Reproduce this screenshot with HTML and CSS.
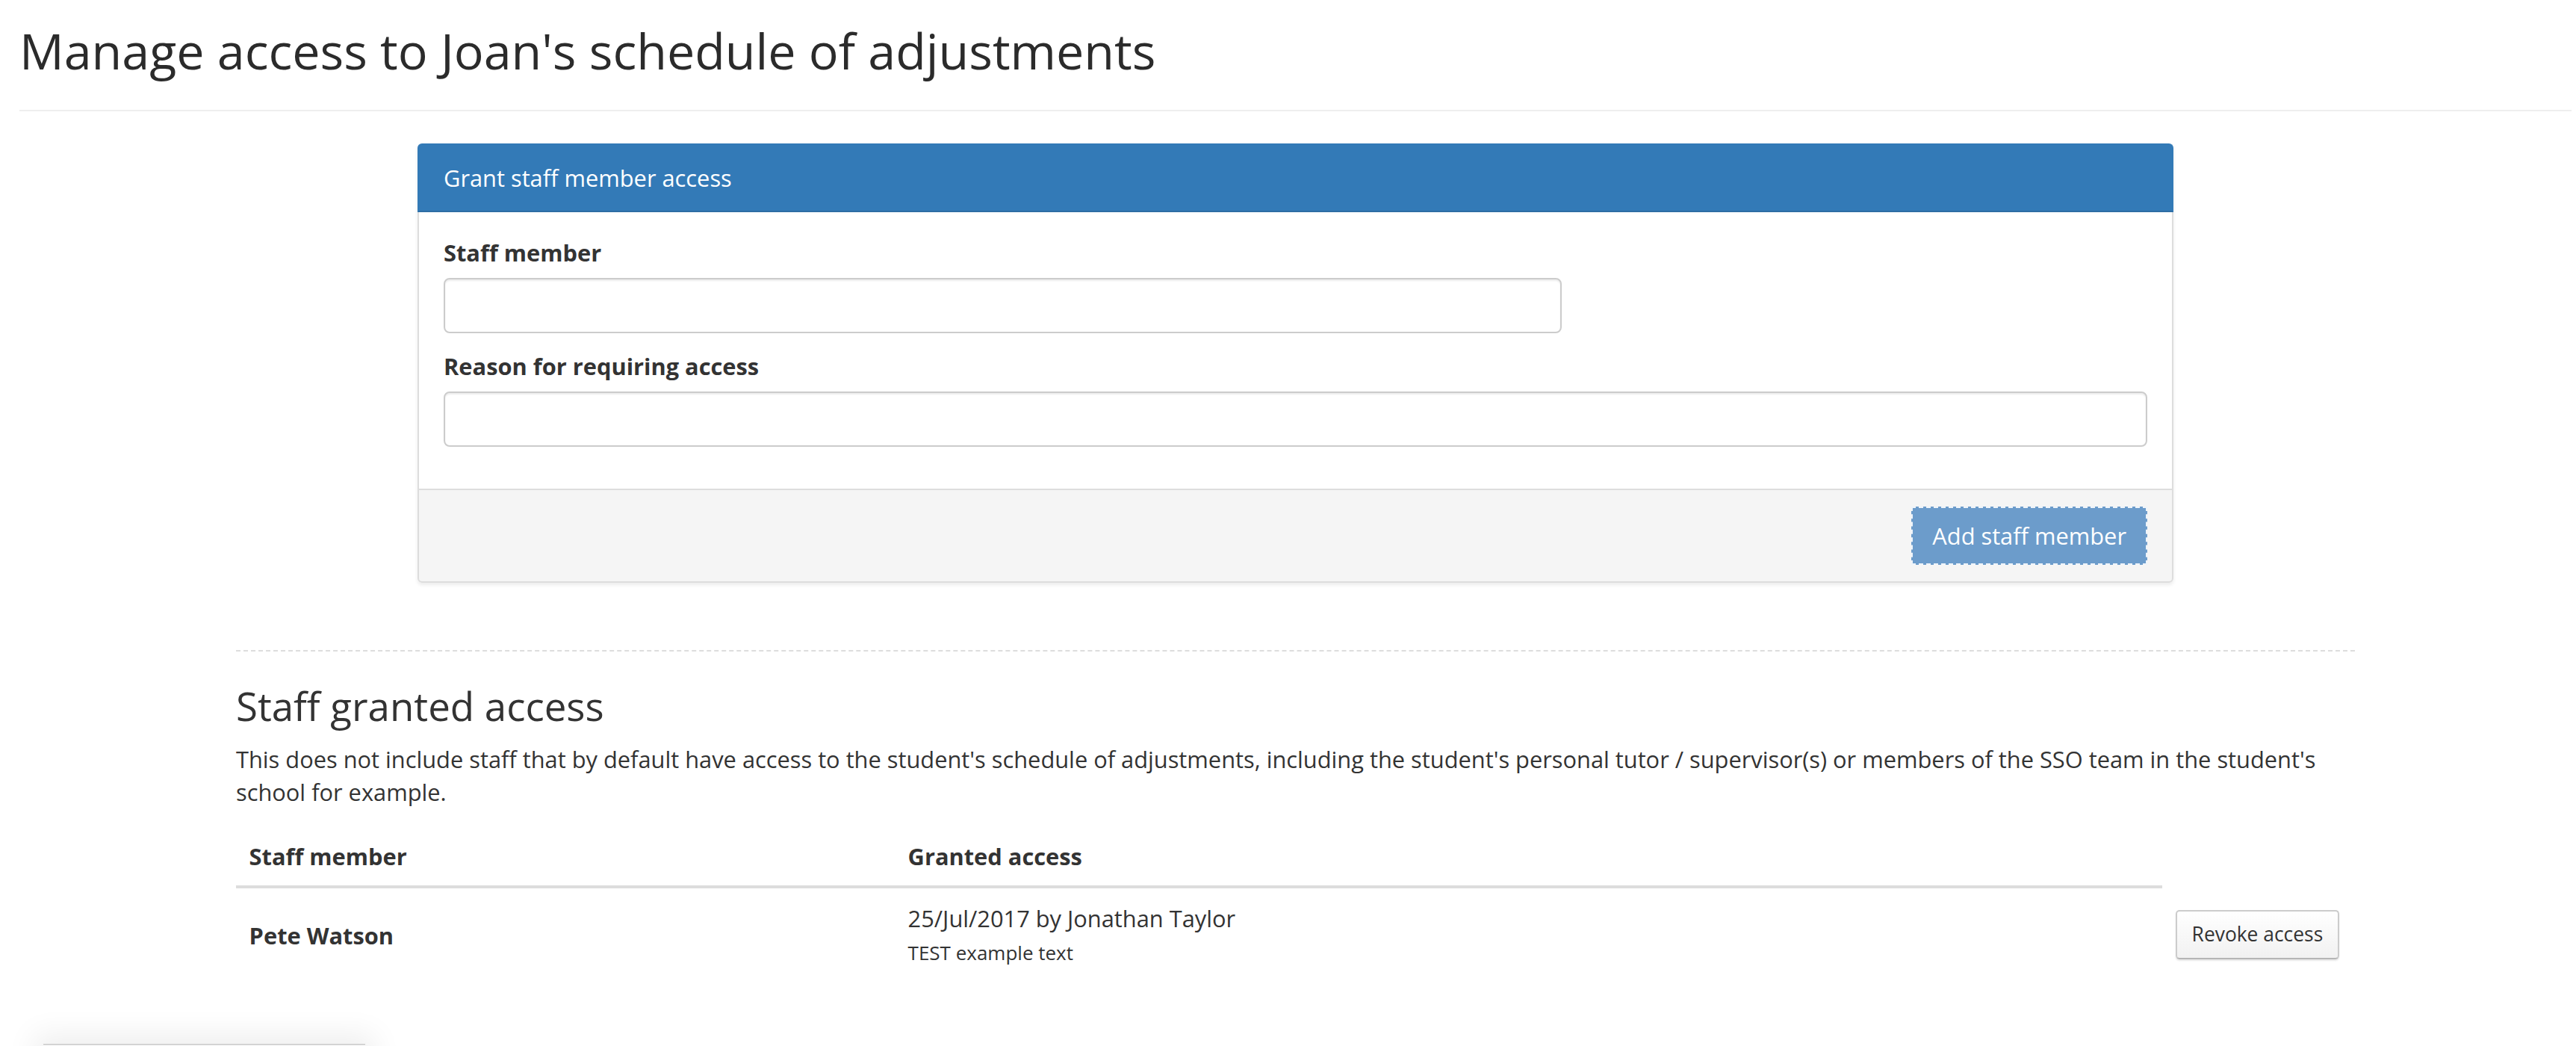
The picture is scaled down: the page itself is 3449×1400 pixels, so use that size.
FILE: index.html
```html
<!DOCTYPE html>
<html lang="en">
<head>
    <meta charset="UTF-8">
    <meta name="viewport" content="width=device-width, initial-scale=1.0">
    <title>Manage access</title>
    <link rel="stylesheet" href="styles.css">
</head>
<body>
    <div class="page">
        <div class="page-header">
            <h1>Manage access to Joan's schedule of adjustments</h1>
        </div>

        <div class="panel">
            <div class="panel-heading">Grant staff member access</div>
            <div class="panel-body">
                <div class="form-group">
                    <label for="staffMember">Staff member</label>
                    <input type="text" id="staffMember" class="form-control staff-input">
                </div>
                <div class="form-group">
                    <label for="reason">Reason for requiring access</label>
                    <input type="text" id="reason" class="form-control">
                </div>
            </div>
            <div class="panel-footer">
                <button type="button" class="btn btn-primary">Add staff member</button>
            </div>
        </div>

        <div class="granted">
            <h2>Staff granted access</h2>
            <p>This does not include staff that by default have access to the student's schedule of adjustments, including the student's personal tutor / supervisor(s) or members of the SSO team in the student's school for example.</p>

            <table class="access-table">
                <colgroup>
                    <col class="col-name">
                    <col>
                    <col class="col-action">
                </colgroup>
                <thead>
                    <tr>
                        <th>Staff member</th>
                        <th>Granted access</th>
                    </tr>
                </thead>
                <tbody>
                    <tr>
                        <td class="name">Pete Watson</td>
                        <td>25/Jul/2017 by Jonathan Taylor<br><small>TEST example text</small></td>
                        <td><button type="button" class="btn btn-sm">Revoke access</button></td>
                    </tr>
                </tbody>
            </table>
        </div>
    </div>

    <!-- floating bar peeking in at the bottom -->
    <div class="dock"></div>
</body>
</html>
```

FILE: styles.css
```css
* {
    box-sizing: border-box;
}

body {
    margin: 0;
    font-family: "Open Sans", "Liberation Sans", Arial, sans-serif;
    font-size: 30.8px;
    line-height: 44px;
    color: #333;
    background-color: #fff;
    overflow: hidden;
}

.page {
    padding: 0 6px 0 26px;
}

.page-header {
    padding-bottom: 43px;
    border-bottom: 2px solid #eee;
}

.page-header h1 {
    margin: 0;
    padding-top: 31px;
    font-size: 66.4px;
    line-height: 1.1;
    font-weight: 400;
    color: #2b2b2b;
}

/* Grant access panel */
.panel {
    width: 2351px;
    margin: 43px auto 0;
    border-radius: 6px;
    box-shadow: 0 3px 5px rgba(0, 0, 0, 0.08);
}

.panel-heading {
    height: 92px;
    line-height: 88px;
    padding: 0 33px;
    background-color: #337ab7;
    border: 2px solid #337ab7;
    border-bottom-color: #2e6da4;
    border-radius: 6px 6px 0 0;
    color: #fff;
}

.panel-body {
    padding: 32px 33px 34px;
    border: 2px solid #ddd;
    border-top: 0;
    border-bottom: 0;
}

.form-group {
    margin-bottom: 22px;
}

.form-group label {
    display: block;
    margin-bottom: 12px;
    font-weight: 700;
}

.form-control {
    display: block;
    width: 100%;
    height: 74px;
    padding: 13px 26px;
    font: inherit;
    color: #555;
    background: #fff;
    border: 2px solid #ccc;
    border-radius: 8px;
    box-shadow: inset 0 2px 2px rgba(0, 0, 0, 0.075);
}

.staff-input {
    width: 1497px;
}

.panel-footer {
    padding: 22px 33px;
    background-color: #f5f5f5;
    border: 2px solid #ddd;
    border-radius: 0 0 6px 6px;
    text-align: right;
}

.btn {
    font: inherit;
    white-space: nowrap;
    cursor: pointer;
}

.btn-primary {
    padding: 15px 26px;
    line-height: 44px;
    color: #fff;
    background-color: #6c9ccb;
    border: 2px dashed #eef4fa;
    border-radius: 0;
}

/* Staff granted access */
.granted {
    width: 2837px;
    margin: 90px auto 0;
    border-top: 2px dashed #ddd;
}

.granted h2 {
    margin: 44px 0 20px;
    font-size: 52.8px;
    line-height: 1.1;
    font-weight: 400;
}

.granted p {
    margin: 0 0 24px;
}

.access-table {
    width: 100%;
    border-collapse: collapse;
    table-layout: fixed;
}

.col-name {
    width: 882px;
}

.col-action {
    width: 258px;
}

.access-table th,
.access-table td {
    padding: 17.6px;
    text-align: left;
    vertical-align: middle;
}

.access-table th {
    font-weight: 700;
    vertical-align: bottom;
    border-bottom: 4px solid #ddd;
}

.access-table .name {
    font-weight: 700;
}

.access-table small {
    font-size: 26px;
}

.btn-sm {
    padding: 11px 20px;
    font-size: 26.4px;
    line-height: 39.6px;
    color: #333;
    background: linear-gradient(#fff, #f1f1f1);
    border: 2px solid #ccc;
    border-bottom-color: #b5b5b5;
    border-radius: 5px;
    box-shadow: 0 2px 2px rgba(0, 0, 0, 0.1);
}

.dock {
    position: fixed;
    left: 58px;
    bottom: -40px;
    width: 431px;
    height: 43px;
    background: #fff;
    border-top: 2px solid #d3d3d3;
    box-shadow: 0 0 40px 12px rgba(0, 0, 0, 0.07);
}
```
